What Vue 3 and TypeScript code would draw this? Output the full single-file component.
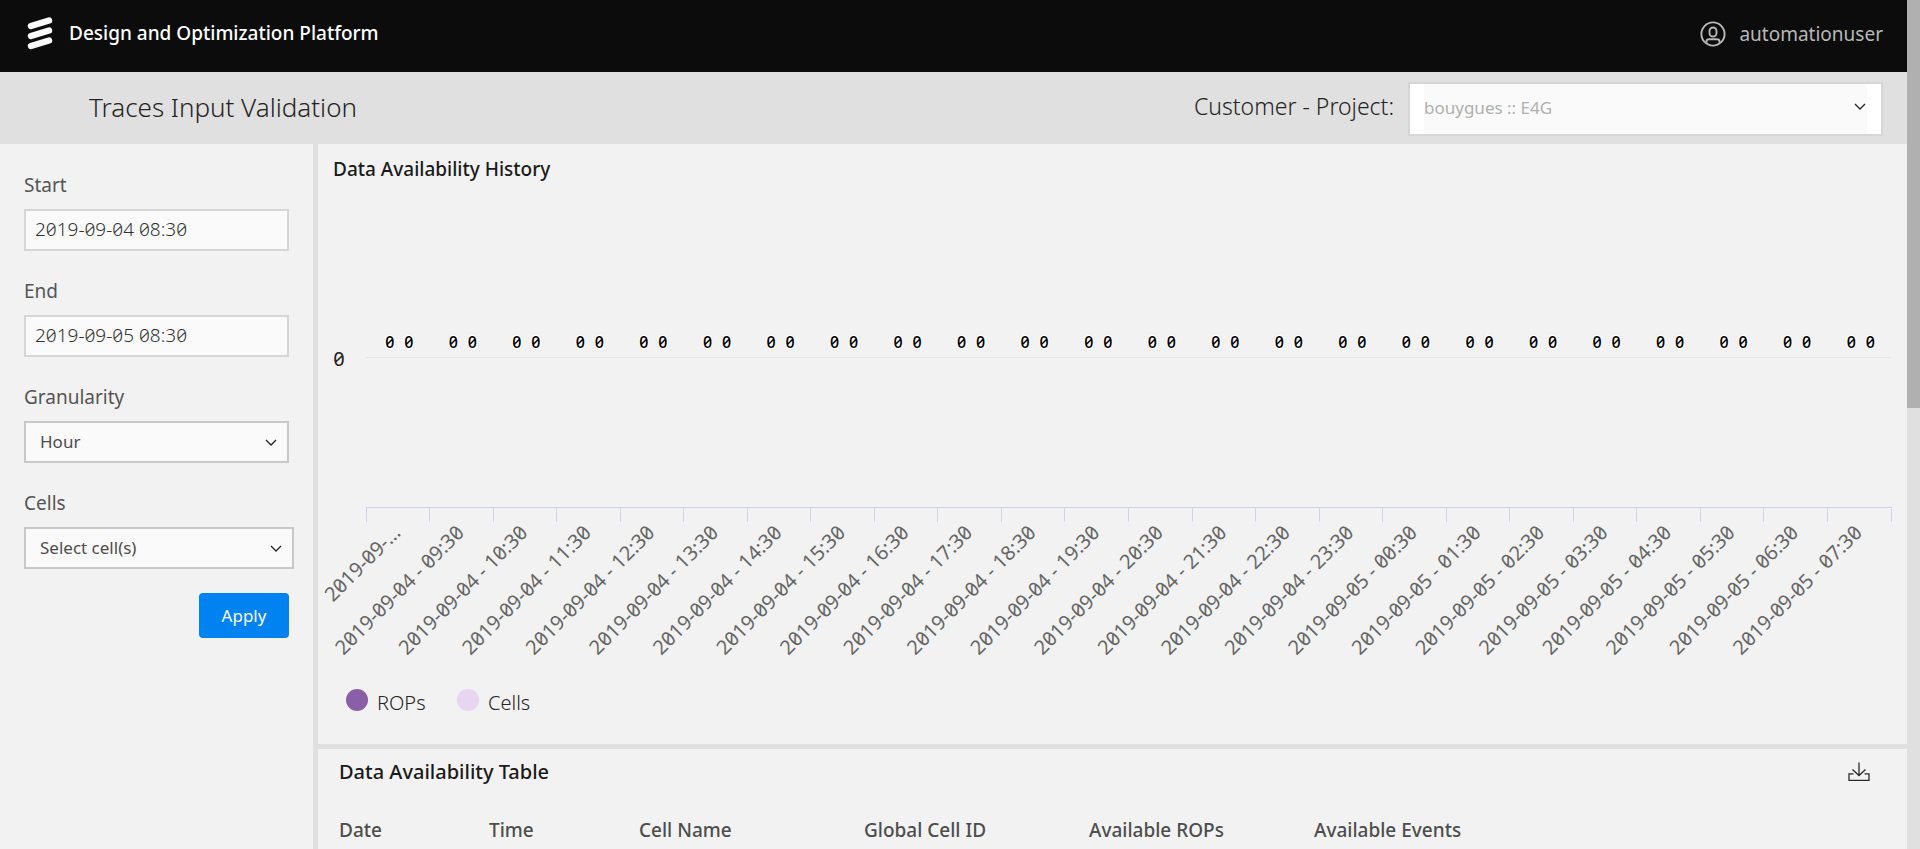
<script setup lang="ts">
import { ref } from 'vue'

interface Category {
  label: string
  centre: number
}

const start = ref('2019-09-04 08:30')
const end = ref('2019-09-05 08:30')

const plot = { left: 48, right: 1573, zero: 213, axis: 363 }
const hours = 24
const step = (plot.right - plot.left) / hours
const pad = (n: number) => String(n).padStart(2, '0')

const categories: Category[] = Array.from({ length: hours }, (_, i) => {
  const hour = 8 + i
  const day = hour < 24 ? '04' : '05'
  return {
    label: i === 0 ? '2019-09-…' : `2019-09-${day} - ${pad(hour % 24)}:30`,
    centre: plot.left + step * (i + 0.5),
  }
})
const ticks = Array.from({ length: hours + 1 }, (_, i) => Math.floor(plot.left + step * i) + 0.5)
const columns = ['Date', 'Time', 'Cell Name', 'Global Cell ID', 'Available ROPs', 'Available Events']
</script>

<template>
  <div class="screen">
    <div class="app">
      <header class="topbar">
        <svg class="logo" viewBox="0 0 26 34" aria-hidden="true">
          <g stroke="#fafafa" stroke-width="6.4" stroke-linecap="round">
            <path d="M4 9 22 3.5M4 19 22 13.500M4 29 22 23.500" />
          </g>
        </svg>
        <span class="product">Design and Optimization Platform</span>
        <a class="user" href="#">
          <svg viewBox="0 0 26 26" fill="none" stroke="currentColor" stroke-width="1.900" aria-hidden="true">
            <circle cx="13" cy="13" r="11.600" />
            <rect x="9.500" y="6.500" width="7" height="9" rx="3.500" />
            <path d="M6.500 21.800v-1.300c0-1.500 1.200-2.200 2.700-2.200h7.600c1.500 0 2.700.7 2.700 2.200v1.300" />
          </svg>
          <span>automationuser</span>
        </a>
      </header>

      <div class="subbar">
        <h1>Traces Input Validation</h1>
        <label for="project">Customer - Project:</label>
        <div class="project">
          <select id="project" disabled>
            <option>bouygues :: E4G</option>
          </select>
          <svg class="chevron" viewBox="0 0 12 8" aria-hidden="true"><path d="M1 1l5 5 5-5" /></svg>
        </div>
      </div>

      <div class="body">
        <form class="filters" @submit.prevent>
          <div class="field">
            <label for="start">Start</label>
            <input id="start" v-model="start" type="text" />
          </div>
          <div class="field">
            <label for="end">End</label>
            <input id="end" v-model="end" type="text" />
          </div>
          <div class="field">
            <label for="granularity">Granularity</label>
            <div class="picker">
              <select id="granularity"><option>Hour</option></select>
              <svg class="chevron" viewBox="0 0 12 8" aria-hidden="true"><path d="M1 1l5 5 5-5" /></svg>
            </div>
          </div>
          <div class="field">
            <label for="cells">Cells</label>
            <div class="picker wide">
              <select id="cells"><option>Select cell(s)</option></select>
              <svg class="chevron" viewBox="0 0 12 8" aria-hidden="true"><path d="M1 1l5 5 5-5" /></svg>
            </div>
          </div>
          <button class="apply" type="submit">Apply</button>
        </form>

        <main class="content">
          <section class="panel history">
            <h2>Data Availability History</h2>
            <svg class="chart" viewBox="0 37 1589 563" role="img" aria-label="Data Availability History">
              <path class="grid" :d="`M${plot.left} ${plot.zero + 0.5}H${plot.right}`" />
              <text class="value-axis" x="21" y="222" text-anchor="middle">0</text>
              <path class="axis" :d="`M${plot.left} ${plot.axis + 0.5}H${plot.right + 1}`" />
              <path v-for="x in ticks" :key="x" class="axis" :d="`M${x} ${plot.axis}v15`" />
              <g v-for="c in categories" :key="c.centre">
                <text class="value" :x="c.centre - 8" y="204" text-anchor="middle">0</text>
                <text class="value" :x="c.centre + 11" y="204" text-anchor="middle">0</text>
                <text
                  class="category"
                  text-anchor="end"
                  :transform="`translate(${c.centre + 4} 390) rotate(-45)`"
                >{{ c.label }}</text>
              </g>
              <circle cx="39" cy="556" r="11" fill="#8b5fa8" />
              <text class="legend" x="59" y="566">ROPs</text>
              <circle cx="150" cy="556" r="11" fill="#e8d5f1" />
              <text class="legend" x="170" y="566">Cells</text>
            </svg>
          </section>

          <section class="panel availability">
            <div class="heading">
              <h2>Data Availability Table</h2>
              <button class="download" type="button" aria-label="Download table">
                <svg viewBox="0 0 22 20" fill="none" stroke="#2b2b2b" stroke-width="1.300" aria-hidden="true">
                  <path d="M11 .5v13M4.500 7.500l6.500 6 6.500-6" />
                  <path d="M5.500 11.800H1v6.500h20v-6.500h-4.500" />
                </svg>
              </button>
            </div>
            <table>
              <thead>
                <tr><th v-for="name in columns" :key="name" scope="col">{{ name }}</th></tr>
              </thead>
            </table>
          </section>
        </main>
      </div>
    </div>
    <div class="scroll" aria-hidden="true"><div class="thumb"></div></div>
  </div>
</template>

<style>
body {
  margin: 0;
  background: #f2f2f2;
}
</style>

<style scoped>
* {
  box-sizing: border-box;
}
.screen {
  display: flex;
  height: 100vh;
  overflow: hidden;
  font-family: 'Noto Sans', 'Open Sans', sans-serif;
  font-feature-settings: 'zero';
  color: #242424;
}
.app {
  flex: 1;
  min-width: 0;
  display: flex;
  flex-direction: column;
}
.topbar {
  flex: none;
  height: 72px;
  padding: 0 24px 4px 27px;
  display: flex;
  align-items: center;
  background: #0c0c0c;
}
.logo {
  width: 26px;
  height: 34px;
}
.product {
  margin-left: 16px;
  padding-bottom: 2px;
  font-size: 19px;
  font-weight: 500;
  color: #fff;
}
.user {
  margin-left: auto;
  display: flex;
  align-items: center;
  gap: 13px;
  font-size: 19px;
  color: #b8b8b8;
  text-decoration: none;
}
.user svg {
  width: 26px;
  height: 26px;
}
.subbar {
  flex: none;
  height: 72px;
  padding: 2px 24px 0 89px;
  display: flex;
  align-items: center;
  background: #e0e0e0;
  font-size: 23px;
}
h1 {
  margin: 0 auto 0 0;
  padding-bottom: 4px;
  font-size: 26px;
  font-weight: 300;
}
.subbar label {
  padding-bottom: 6px;
  font-weight: 300;
}
.project {
  position: relative;
  width: 475px;
  height: 54px;
  margin-left: 14px;
  padding: 0 14px;
  border: 2px solid #d6d6d6;
  background: #fff;
}
select {
  appearance: none;
  width: 100%;
  height: 100%;
  padding: 0;
  border: 0;
  border-radius: 0;
  background: #fafafa;
  color: #4d4d4d;
  font: inherit;
  font-size: 17px;
  opacity: 1;
}
.project select {
  display: block;
  padding-bottom: 3px;
  color: #b0b0b0;
}
.chevron {
  position: absolute;
  right: 10px;
  top: 50%;
  width: 12px;
  height: 8px;
  margin-top: -3px;
  fill: none;
  stroke: #242424;
  stroke-width: 1.3;
  pointer-events: none;
}
.project .chevron {
  right: 15px;
  top: 44%;
}
.body {
  flex: 1;
  min-height: 0;
  display: flex;
}
.filters {
  flex: none;
  width: 318px;
  padding: 29px 24px 0;
  border-right: 5px solid #e0e0e0;
  background: #f2f2f2;
}
.field {
  margin-bottom: 28px;
}
.field label {
  display: block;
  margin-bottom: 12px;
  font-size: 19px;
  line-height: 24px;
  color: #555;
}
.field input {
  display: block;
  width: 100%;
  height: 42px;
  padding: 0 9px 3px;
  border: 2px solid #d6d6d6;
  border-radius: 0;
  background: #fafafa;
  font: inherit;
  font-size: 19px;
  font-weight: 300;
  font-feature-settings: 'zero';
  color: #333;
}
.picker {
  position: relative;
  height: 42px;
  border: 2px solid #c8c8c8;
}
.picker.wide {
  margin-right: -5px;
}
.picker select {
  display: block;
  padding: 0 0 2px 14px;
}
.apply {
  display: block;
  width: 90px;
  height: 45px;
  margin: -4px 0 0 auto;
  border: 0;
  border-radius: 4px;
  background: #0082f0;
  color: #fff;
  font: inherit;
  font-size: 17px;
}
.content {
  flex: 1;
  min-width: 0;
  overflow: hidden;
}
.panel {
  background: #f2f2f2;
}
.history {
  border-bottom: 5px solid #e0e0e0;
}
h2 {
  margin: 0;
  font-size: 20px;
  line-height: 24px;
  font-weight: 500;
  color: #1a1a1a;
}
.history h2 {
  padding: 13px 15px 0;
  font-size: 19px;
}
.chart {
  display: block;
  width: 100%;
}
.chart text {
  fill: #242424;
}
.grid {
  stroke: #e6e6e6;
}
.axis {
  stroke: #ccd6eb;
}
.chart .value-axis {
  font-size: 20px;
}
.chart .value {
  font-size: 16px;
  font-weight: 500;
  fill: #000;
  stroke: #fff;
  stroke-width: 2px;
  paint-order: stroke;
}
.chart .category {
  font-size: 20px;
  fill: #666;
}
.chart .legend {
  font-size: 20px;
  font-weight: 300;
}
.heading {
  display: flex;
  align-items: center;
  justify-content: space-between;
  height: 46px;
  padding: 0 37px 0 21px;
}
.download {
  width: 22px;
  height: 20px;
  padding: 0;
  border: 0;
  background: none;
}
.download svg {
  display: block;
  width: 22px;
  height: 20px;
}
table {
  width: 100%;
  margin-top: 23px;
  border-collapse: collapse;
  table-layout: fixed;
}
th {
  padding: 0 0 0 21px;
  text-align: left;
  font-size: 19px;
  line-height: 24px;
  font-weight: 500;
  color: #4d4d4d;
}
th:nth-child(-n + 2) {
  width: 150px;
}
th:nth-child(n + 3) {
  width: 225px;
}
th:last-child {
  width: auto;
}
.scroll {
  flex: none;
  width: 13px;
  background: #e0e0e0;
}
.thumb {
  height: 48%;
  background: #b0b0b0;
}
</style>
